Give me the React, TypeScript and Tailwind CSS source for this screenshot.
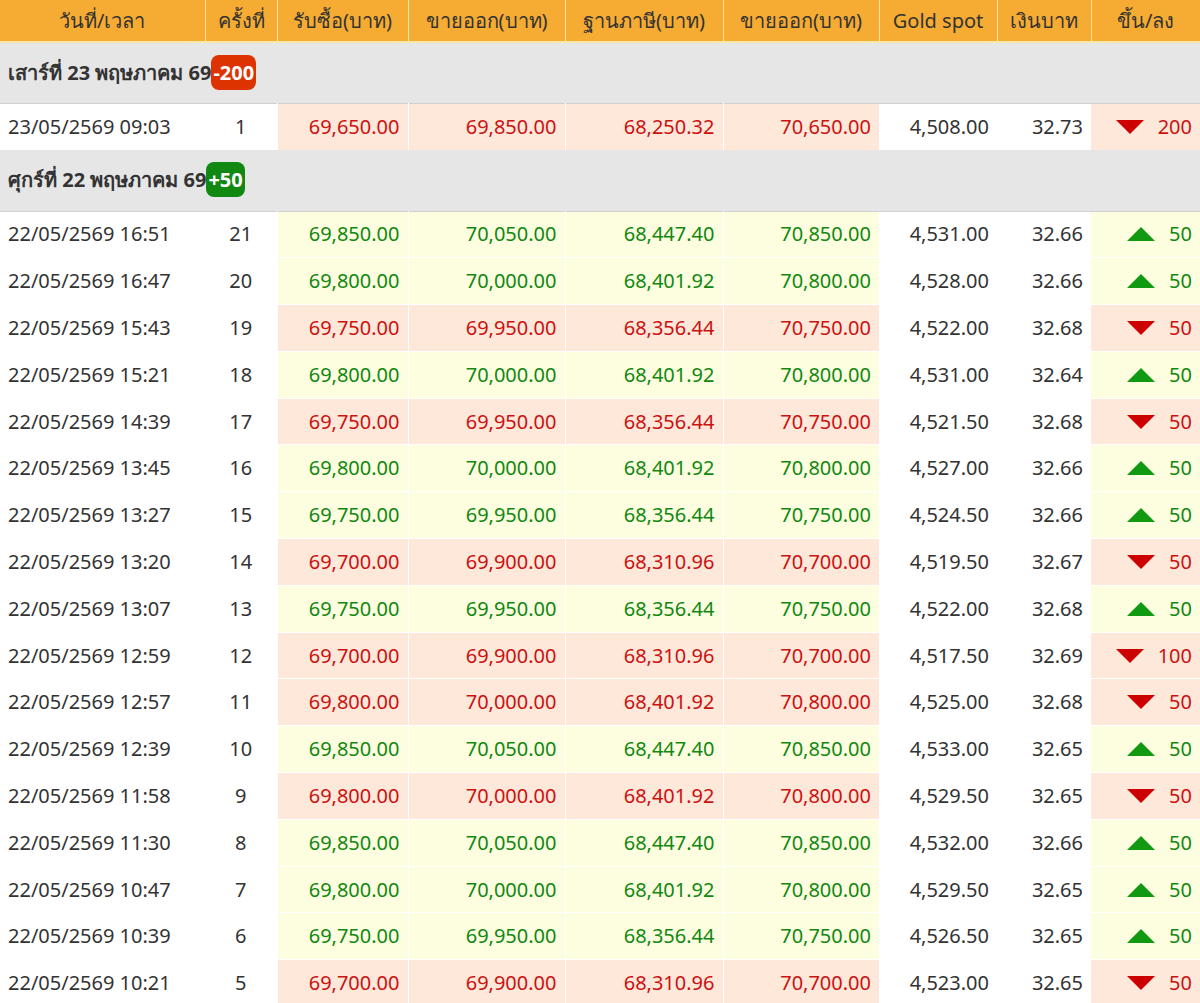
const rows: [string, number, string, string, string, string, string, string, 'u' | 'd', number][] = [
  ['22/05/2569 16:51', 21, '69,850.00', '70,050.00', '68,447.40', '70,850.00', '4,531.00', '32.66', 'u', 50],
  ['22/05/2569 16:47', 20, '69,800.00', '70,000.00', '68,401.92', '70,800.00', '4,528.00', '32.66', 'u', 50],
  ['22/05/2569 15:43', 19, '69,750.00', '69,950.00', '68,356.44', '70,750.00', '4,522.00', '32.68', 'd', 50],
  ['22/05/2569 15:21', 18, '69,800.00', '70,000.00', '68,401.92', '70,800.00', '4,531.00', '32.64', 'u', 50],
  ['22/05/2569 14:39', 17, '69,750.00', '69,950.00', '68,356.44', '70,750.00', '4,521.50', '32.68', 'd', 50],
  ['22/05/2569 13:45', 16, '69,800.00', '70,000.00', '68,401.92', '70,800.00', '4,527.00', '32.66', 'u', 50],
  ['22/05/2569 13:27', 15, '69,750.00', '69,950.00', '68,356.44', '70,750.00', '4,524.50', '32.66', 'u', 50],
  ['22/05/2569 13:20', 14, '69,700.00', '69,900.00', '68,310.96', '70,700.00', '4,519.50', '32.67', 'd', 50],
  ['22/05/2569 13:07', 13, '69,750.00', '69,950.00', '68,356.44', '70,750.00', '4,522.00', '32.68', 'u', 50],
  ['22/05/2569 12:59', 12, '69,700.00', '69,900.00', '68,310.96', '70,700.00', '4,517.50', '32.69', 'd', 100],
  ['22/05/2569 12:57', 11, '69,800.00', '70,000.00', '68,401.92', '70,800.00', '4,525.00', '32.68', 'd', 50],
  ['22/05/2569 12:39', 10, '69,850.00', '70,050.00', '68,447.40', '70,850.00', '4,533.00', '32.65', 'u', 50],
  ['22/05/2569 11:58', 9, '69,800.00', '70,000.00', '68,401.92', '70,800.00', '4,529.50', '32.65', 'd', 50],
  ['22/05/2569 11:30', 8, '69,850.00', '70,050.00', '68,447.40', '70,850.00', '4,532.00', '32.66', 'u', 50],
  ['22/05/2569 10:47', 7, '69,800.00', '70,000.00', '68,401.92', '70,800.00', '4,529.50', '32.65', 'u', 50],
  ['22/05/2569 10:39', 6, '69,750.00', '69,950.00', '68,356.44', '70,750.00', '4,526.50', '32.65', 'u', 50],
  ['22/05/2569 10:21', 5, '69,700.00', '69,900.00', '68,310.96', '70,700.00', '4,523.00', '32.65', 'd', 50],
]

const headers = ['วันที่/เวลา', 'ครั้งที่', 'รับซื้อ(บาท)', 'ขายออก(บาท)', 'ฐานภาษี(บาท)', 'ขายออก(บาท)', 'Gold spot', 'เงินบาท', 'ขึ้น/ลง']
const widths = ['w-[205px]', 'w-[72px]', 'w-[131px]', 'w-[157px]', 'w-[158px]', 'w-[156px]', 'w-[118px]', 'w-[94px]', 'w-[109px]']

function Arrow({ up }: { up: boolean }) {
  return up ? (
    <svg width="28" height="14" viewBox="0 0 28 14"><path d="M14 0 L28 14 L0 14 Z" fill="#119911" /></svg>
  ) : (
    <svg width="28" height="14" viewBox="0 0 28 14"><path d="M0 0 L28 0 L14 14 Z" fill="#cc0000" /></svg>
  )
}

function Row({ r }: { r: (typeof rows)[number] }) {
  const up = r[8] === 'u'
  const bg = up ? 'bg-[#fdfee0]' : 'bg-[#fde8da]'
  const tc = up ? 'text-[#118811]' : 'text-[#cc1111]'
  return (
    <tr className="h-[46.8px] border-b border-white">
      <td className="pl-2 text-[#333]">{r[0]}</td>
      <td className="text-center text-[#333]">{r[1]}</td>
      {[r[2], r[3], r[4], r[5]].map((v, i) => (
        <td key={i} className={`${bg} ${tc} text-right pr-2 border-l border-white`}>{v}</td>
      ))}
      <td className="text-right pr-2 text-[#333]">{r[6]}</td>
      <td className="text-right pr-2 text-[#333]">{r[7]}</td>
      <td className={`${bg} ${tc} text-right pr-2`}>
        <span className="inline-flex items-center gap-[14px]">
          <Arrow up={up} />
          {r[9]}
        </span>
      </td>
    </tr>
  )
}

function Group({ label, badge, up }: { label: string; badge: string; up: boolean }) {
  return (
    <tr className="h-[61px] bg-[#e6e6e6] border-b border-[#d0d0d0]">
      <td colSpan={9} className="pl-2 font-bold text-[#333]">
        {label}
        <span className={`${up ? 'bg-[#118811]' : 'bg-[#dd3300]'} text-white rounded-lg px-[2px] py-[4px]`}>{badge}</span>
      </td>
    </tr>
  )
}

export default function App() {
  return (
    <div className="w-[1200px] h-[1003px] overflow-hidden bg-white" style={{ fontFamily: 'Tahoma, "Noto Sans", "DejaVu Sans", sans-serif' }}>
      <table className="w-[1200px] table-fixed border-collapse text-[20px]">
        <thead>
          <tr className="h-[42px] bg-[#f6ab32] border-b-2 border-[#fbe7a6]">
            {headers.map((h, i) => (
              <th key={i} className={`${widths[i]} font-normal text-[#333] text-center border-l border-[#fbe7a6] first:border-l-0`}>{h}</th>
            ))}
          </tr>
        </thead>
        <tbody>
          <Group label="เสาร์ที่ 23 พฤษภาคม 69" badge="-200" up={false} />
          <tr className="h-[47px]">
            <td className="pl-2 text-[#333]">23/05/2569 09:03</td>
            <td className="text-center text-[#333]">1</td>
            {['69,650.00', '69,850.00', '68,250.32', '70,650.00'].map((v, i) => (
              <td key={i} className="bg-[#fde8da] text-[#cc1111] text-right pr-2 border-l border-white">{v}</td>
            ))}
            <td className="text-right pr-2 text-[#333]">4,508.00</td>
            <td className="text-right pr-2 text-[#333]">32.73</td>
            <td className="bg-[#fde8da] text-[#cc1111] text-right pr-2">
              <span className="inline-flex items-center gap-[14px]">
                <Arrow up={false} />
                200
              </span>
            </td>
          </tr>
          <Group label="ศุกร์ที่ 22 พฤษภาคม 69" badge="+50" up={true} />
          {rows.map((r, i) => <Row key={i} r={r} />)}
        </tbody>
      </table>
    </div>
  )
}
